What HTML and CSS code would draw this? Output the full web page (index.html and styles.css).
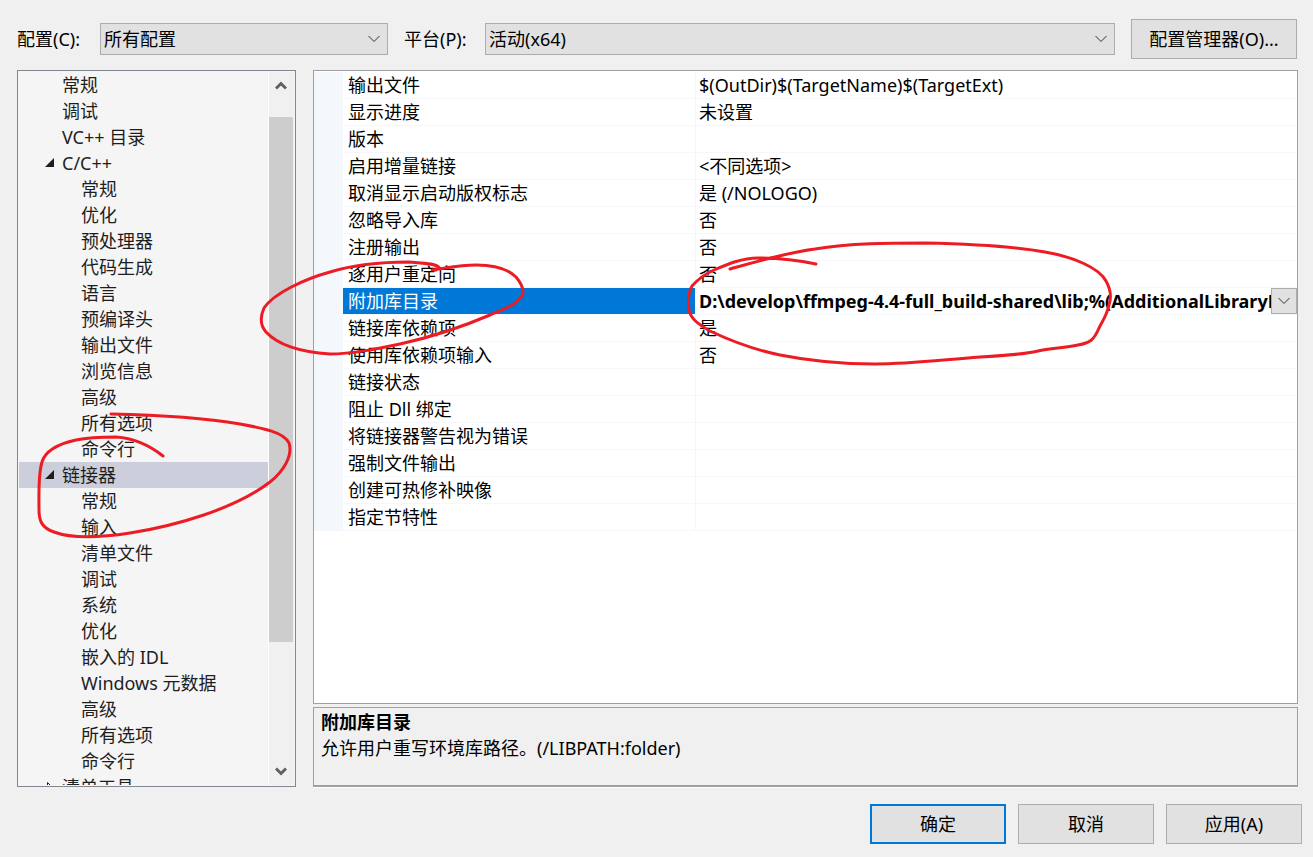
FILE: index.html
```html
<!DOCTYPE html>
<html lang="zh-CN">
<head>
    <meta charset="UTF-8">
    <title>属性页</title>
    <link rel="stylesheet" href="styles.css">
</head>
<body>
    <div class="toolbar">
        <label class="label-config" for="config">配置(C):</label>
        <div class="select-box select-config">
            <select id="config"><option>所有配置</option></select>
            <svg width="12" height="8" viewBox="0 0 12 8"><path d="M0.5 1L6 6.5L11.5 1"/></svg>
        </div>
        <label class="label-platform" for="platform">平台(P):</label>
        <div class="select-box select-platform">
            <select id="platform"><option>活动(x64)</option></select>
            <svg width="12" height="8" viewBox="0 0 12 8"><path d="M0.5 1L6 6.5L11.5 1"/></svg>
        </div>
        <button class="btn btn-manager" type="button">配置管理器(O)...</button>
    </div>

    <main class="content">
        <nav class="tree">
            <ul class="tree-list">
                <li><a href="#">常规</a></li>
                <li><a href="#">调试</a></li>
                <li><a href="#">VC++ 目录</a></li>
                <li>
                    <a href="#"><svg class="arrow" width="10" height="10" viewBox="0 0 10 10"><path d="M9 0V9H0Z"/></svg>C/C++</a>
                    <ul>
                        <li><a href="#">常规</a></li>
                        <li><a href="#">优化</a></li>
                        <li><a href="#">预处理器</a></li>
                        <li><a href="#">代码生成</a></li>
                        <li><a href="#">语言</a></li>
                        <li><a href="#">预编译头</a></li>
                        <li><a href="#">输出文件</a></li>
                        <li><a href="#">浏览信息</a></li>
                        <li><a href="#">高级</a></li>
                        <li><a href="#">所有选项</a></li>
                        <li><a href="#">命令行</a></li>
                    </ul>
                </li>
                <li>
                    <a class="selected" href="#"><svg class="arrow" width="10" height="10" viewBox="0 0 10 10"><path d="M9 0V9H0Z"/></svg>链接器</a>
                    <ul>
                        <li><a href="#">常规</a></li>
                        <li><a href="#">输入</a></li>
                        <li><a href="#">清单文件</a></li>
                        <li><a href="#">调试</a></li>
                        <li><a href="#">系统</a></li>
                        <li><a href="#">优化</a></li>
                        <li><a href="#">嵌入的 IDL</a></li>
                        <li><a href="#">Windows 元数据</a></li>
                        <li><a href="#">高级</a></li>
                        <li><a href="#">所有选项</a></li>
                        <li><a href="#">命令行</a></li>
                    </ul>
                </li>
                <li><a href="#"><svg class="arrow closed" width="10" height="10" viewBox="0 0 10 10"><path d="M2.5 0.5L7 5L2.5 9.5Z"/></svg>清单工具</a></li>
            </ul>
            <div class="scrollbar">
                <button type="button" aria-label="向上"><svg width="12" height="10" viewBox="0 0 12 10"><path d="M1 7.5L6 2.5L11 7.5"/></svg></button>
                <div class="track">
                    <div class="thumb"></div>
                </div>
                <button type="button" aria-label="向下"><svg width="12" height="10" viewBox="0 0 12 10"><path d="M1 2.5L6 7.5L11 2.5"/></svg></button>
            </div>
        </nav>

        <section class="properties">
            <div class="grid">
                <table>
                    <colgroup><col class="col-gutter"><col class="col-name"><col></colgroup>
                    <tbody>
                        <tr><td></td><th>输出文件</th><td>$(OutDir)$(TargetName)$(TargetExt)</td></tr>
                        <tr><td></td><th>显示进度</th><td>未设置</td></tr>
                        <tr><td></td><th>版本</th><td></td></tr>
                        <tr><td></td><th>启用增量链接</th><td>&lt;不同选项&gt;</td></tr>
                        <tr><td></td><th>取消显示启动版权标志</th><td>是 (/NOLOGO)</td></tr>
                        <tr><td></td><th>忽略导入库</th><td>否</td></tr>
                        <tr><td></td><th>注册输出</th><td>否</td></tr>
                        <tr><td></td><th>逐用户重定向</th><td>否</td></tr>
                        <tr class="active">
                            <td></td>
                            <th>附加库目录</th>
                            <td>
                                <div class="editor">
                                    <span>D:\develop\ffmpeg-4.4-full_build-shared\lib;%(AdditionalLibraryDirectories)</span>
                                    <button type="button" aria-label="展开"><svg width="12" height="8" viewBox="0 0 12 8"><path d="M0.5 1L6 6.5L11.5 1"/></svg></button>
                                </div>
                            </td>
                        </tr>
                        <tr><td></td><th>链接库依赖项</th><td>是</td></tr>
                        <tr><td></td><th>使用库依赖项输入</th><td>否</td></tr>
                        <tr><td></td><th>链接状态</th><td></td></tr>
                        <tr><td></td><th>阻止 Dll 绑定</th><td></td></tr>
                        <tr><td></td><th>将链接器警告视为错误</th><td></td></tr>
                        <tr><td></td><th>强制文件输出</th><td></td></tr>
                        <tr><td></td><th>创建可热修补映像</th><td></td></tr>
                        <tr><td></td><th>指定节特性</th><td></td></tr>
                    </tbody>
                </table>
            </div>
            <div class="description">
                <h2>附加库目录</h2>
                <p>允许用户重写环境库路径。(/LIBPATH:folder)</p>
            </div>
        </section>
    </main>

    <footer class="footer">
        <button class="btn btn-default" type="button">确定</button>
        <button class="btn" type="button">取消</button>
        <button class="btn" type="button">应用(A)</button>
    </footer>

    <!-- red pen marks -->
    <svg class="marks" width="1313" height="857" viewBox="0 0 1313 857">
        <path d="M111 414C160 415 205 418 240 424C262 428 284 432 289 443C293 455 284 471 270 482C235 509 175 526 130 533C98 538 70 538 54 532C42 528 39 521 39 510C39 494 38 475 42 462C46 449 62 443 76 440C90 437 104 437 116 437C132 438 149 445 163 456"/>
        <path d="M432 270C447 268 460 265 476 265C496 265 508 269 516 277C521 283 525 290 522 296C516 305 504 309 490 315C462 327 432 337 400 344C376 349 352 354 330 354C300 352 278 345 266 332C260 325 260 317 264 308C274 293 305 279 330 272C356 264 382 262 409 262C422 263 438 263 440 269"/>
        <path d="M730 269C755 262 785 253 815 249C850 243 890 243 925 243C970 244 1013 246 1045 252C1074 257 1099 268 1106 281C1110 288 1112 296 1109 305C1107 315 1103 320 1099 328C1094 340 1090 343 1078 345C1064 348 1050 348 1038 351C1020 355 1000 356 980 357C940 360 910 364 875 364C840 364 810 361 780 355C750 349 727 339 710 331C698 324 691 319 689 310C688 301 688 292 692 286C699 278 705 274 714 270C728 264 742 258 758 258C778 258 797 260 816 264"/>
    </svg>
</body>
</html>
```

FILE: styles.css
```css
* {
    box-sizing: border-box;
}
body {
    position: relative;
    display: flex;
    flex-direction: column;
    height: 100vh;
    margin: 0;
    padding: 19px 0 13px;
    overflow: hidden;
    background: #f0f0f0;
    color: #000;
    font-family: "Noto Sans", "Noto Sans CJK SC", sans-serif;
    font-size: 18px;
    line-height: 26px;
}
button,
select {
    font: inherit;
    color: inherit;
}
svg {
    fill: none;
    stroke: #333;
}

/* toolbar */
.toolbar {
    display: flex;
    align-items: center;
    padding: 0 16px 0 17px;
}
.label-config {
    width: 83px;
}
.label-platform {
    width: 81px;
}
.select-box {
    position: relative;
}
.select-config {
    width: 288px;
    margin-right: 16px;
}
.select-platform {
    flex: 1;
    margin-right: 16px;
}
.select-box select {
    display: block;
    width: 100%;
    height: 32px;
    padding: 0 28px 0 3px;
    border: 1px solid #adadad;
    border-radius: 0;
    background: #e1e1e1;
    appearance: none;
}
.select-box svg {
    position: absolute;
    top: 12px;
    right: 8px;
    pointer-events: none;
}
.btn {
    width: 136px;
    height: 40px;
    padding: 0;
    border: 1px solid #adadad;
    background: #e1e1e1;
}
.btn-manager {
    width: 166px;
}
.btn-default {
    border: 2px solid #0078d7;
}

/* main area */
.content {
    display: flex;
    flex: 1;
    gap: 17px;
    min-height: 0;
    margin-top: 11px;
    padding: 0 15px 0 17px;
}
.tree {
    display: flex;
    width: 279px;
    padding: 1px;
    border: 1px solid #828790;
    background: #f5f5f5;
}
.tree ul {
    margin: 0;
    padding: 0;
    list-style: none;
}
.tree-list {
    flex: 1;
    overflow: hidden;
}
.tree a {
    position: relative;
    display: block;
    height: 26px;
    padding-left: 43px;
    color: #1e1e1e;
    text-decoration: none;
    white-space: nowrap;
}
.tree ul ul a {
    padding-left: 62px;
}
.tree a.selected {
    background: #cccedb;
}
.arrow {
    position: absolute;
    top: 8px;
    left: 26px;
    fill: #1e1e1e;
    stroke: none;
}
.arrow.closed {
    fill: none;
    stroke: #1e1e1e;
}
.scrollbar {
    display: flex;
    flex-direction: column;
    width: 26px;
    padding-right: 1px;
    border-left: 1px solid #fff;
    background: #f0f0f0;
}
.scrollbar button {
    height: 28px;
    padding: 0;
    border: none;
    background: none;
    line-height: 0;
}
.scrollbar svg {
    stroke: #606060;
    stroke-width: 3;
}
.track {
    display: flex;
    flex: 1;
    flex-direction: column;
    padding-top: 17px;
}
.thumb {
    height: 82%;
    background: #cdcdcd;
}
.properties {
    display: flex;
    flex: 1;
    flex-direction: column;
    gap: 3px;
    min-width: 0;
}
.grid {
    flex: 1;
    padding-top: 1px;
    overflow: hidden;
    border: 1px solid #a0a0a0;
    background: #fff;
}
.grid table {
    width: 100%;
    table-layout: fixed;
    border-collapse: separate;
    border-spacing: 0;
}
.col-gutter {
    width: 29px;
}
.col-name {
    width: 353px;
}
.grid td,
.grid th {
    height: 27px;
    padding: 0 0 0 3px;
    border-bottom: 1px solid #f4f7fc;
    font-weight: normal;
    text-align: left;
    white-space: nowrap;
}
.grid th {
    padding-left: 5px;
    border-right: 1px solid #f4f7fc;
}
.grid td:first-child {
    background: #f4f7fc;
}
.grid .active th {
    background: #0078d7;
    background-clip: padding-box;
    color: #fff;
}
.editor {
    display: flex;
    height: 26px;
    font-weight: bold;
}
.editor span {
    flex: 1;
    min-width: 0;
    overflow: hidden;
}
.editor button {
    width: 26px;
    padding: 0;
    border: 1px solid #adadad;
    background: #e1e1e1;
    line-height: 0;
}
.description {
    height: 80px;
    padding: 1px 7px;
    border: 1px solid #a0a0a0;
    border-bottom-width: 2px;
    box-shadow: 0 1px #fff;
}
.description h2 {
    margin: 0;
    font-size: 18px;
}
.description p {
    margin: 0;
}

/* footer */
.footer {
    display: flex;
    justify-content: flex-end;
    gap: 12px;
    margin-top: 17px;
    padding-right: 11px;
}

/* red pen marks */
.marks {
    position: absolute;
    top: 0;
    left: 0;
    pointer-events: none;
}
.marks path {
    stroke: #ed1c24;
    stroke-width: 3;
    stroke-linecap: round;
}
```
